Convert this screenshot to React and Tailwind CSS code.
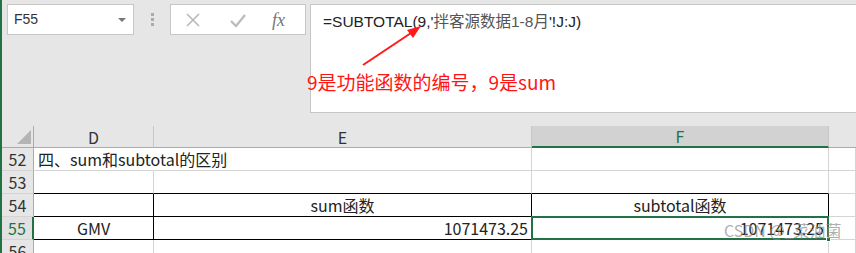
import React from 'react'

const font = { fontFamily: '"Noto Sans CJK SC", "Noto Sans", sans-serif' }

function Cell({ className = '', children }) {
  return (
    <div className={`flex items-center border-r border-b border-[#d4d4d4] bg-white text-[16px] text-[#222] overflow-visible whitespace-nowrap ${className}`}>
      {children}
    </div>
  )
}

function RowHead({ n, active }) {
  return (
    <div
      className={`flex items-center justify-center border-b border-[#d4d4d4] text-[16px] ${
        active
          ? 'bg-[#e1e1e1] text-[#217346] border-r-2 border-r-[#217346]'
          : 'bg-[#e6e6e6] text-[#333] border-r border-r-[#ababab]'
      }`}
    >
      {n}
    </div>
  )
}

export default function App() {
  return (
    <div
      className="relative w-[856px] h-[253px] overflow-hidden bg-[#e6e6e6] border-l-2 border-[#217346]"
      style={font}
    >
      {/* toolbar */}
      <div className="flex items-start h-[126px] pt-[4px]">
        <div className="ml-[5px] w-[127px] h-[31px] bg-white border border-[#c6c6c6] flex items-center justify-between pl-[6px] pr-[7px]">
          <span className="text-[14px] text-[#333] font-['Liberation_Sans',sans-serif]">F55</span>
          <span className="w-0 h-0 border-l-[4px] border-r-[4px] border-t-[4px] border-l-transparent border-r-transparent border-t-[#777]" />
        </div>
        <div className="ml-[17px] mt-[9px] flex flex-col gap-[2px]">
          <span className="w-[3px] h-[3px] bg-[#ababab]" />
          <span className="w-[3px] h-[3px] bg-[#ababab]" />
          <span className="w-[3px] h-[3px] bg-[#ababab]" />
        </div>
        <div className="ml-[16px] w-[136px] h-[31px] bg-white border border-[#c6c6c6] flex items-center">
          <svg width="16" height="16" viewBox="0 0 16 16" className="ml-[14px]">
            <path d="M2 2 L14 14 M14 2 L2 14" stroke="#b9b9b9" strokeWidth="1.6" fill="none" />
          </svg>
          <svg width="18" height="16" viewBox="0 0 18 16" className="ml-[28px]">
            <path d="M2 9 L7 14 L16 3" stroke="#bdbdbd" strokeWidth="2.4" fill="none" />
          </svg>
          <span className="ml-[25px] text-[18px] italic text-[#777] font-['Liberation_Serif',serif] leading-none">
            fx
          </span>
        </div>
        <div className="ml-[4px] flex-1 -mr-[4px] h-[109px] bg-white border border-[#c6c6c6] pl-[12px] pt-[3px]">
          <span className="text-[15.5px] text-[#222] font-['Liberation_Sans','Noto_Sans_CJK_SC',sans-serif]">
            =SUBTOTAL(9,'<span className="text-[#555]">拌客源数据1-8月</span>'!J:J)
          </span>
        </div>
      </div>

      {/* sheet grid */}
      <div className="grid grid-cols-[32px_120px_378px_297px_1fr] grid-rows-[22px_23px_23px_23px_23px_23px]">
        <div className="relative bg-[#e6e6e6] border-r border-b border-[#ababab]">
          <span className="absolute right-[2px] bottom-[3px] w-0 h-0" style={{ borderBottom: '14px solid #b4b4b4', borderLeft: '14px solid transparent' }} />
        </div>
        <div className="flex items-center justify-center bg-[#e6e6e6] border-r border-r-[#c6c6c6] border-b border-b-[#ababab] text-[16px] text-[#333]">D</div>
        <div className="flex items-center justify-center bg-[#e6e6e6] border-r border-r-[#c6c6c6] border-b border-b-[#ababab] text-[16px] text-[#333]">E</div>
        <div className="flex items-center justify-center bg-[#d2d2d2] border-r border-r-[#c6c6c6] border-b-2 border-b-[#217346] text-[16px] text-[#217346]">F</div>
        <div className="bg-[#e6e6e6] border-b border-b-[#ababab]" />

        {/* 52 */}
        <RowHead n="52" />
        <Cell className="pl-[4px] z-10 !border-r-transparent text-[16.5px]">四、sum和subtotal的区别</Cell>
        <Cell />
        <Cell />
        <Cell />

        {/* 53 */}
        <RowHead n="53" />
        <Cell className="!border-b-black" />
        <Cell className="!border-b-black" />
        <Cell className="!border-b-black" />
        <Cell />

        {/* 54 */}
        <RowHead n="54" />
        <Cell className="!border-r-black !border-b-black" />
        <Cell className="justify-center !border-r-black !border-b-black">sum函数</Cell>
        <Cell className="justify-center !border-r-black !border-b-black">subtotal函数</Cell>
        <Cell />

        {/* 55 */}
        <RowHead n="55" active />
        <Cell className="justify-center !border-r-black !border-b-black">GMV</Cell>
        <Cell className="justify-end pr-[3px] !border-r-black !border-b-black">1071473.25</Cell>
        <Cell className="relative justify-end pr-[4px] !border-b-black">
          1071473.25
          <span className="absolute -left-[1px] -top-[1px] -right-[1px] -bottom-[1px] border-2 border-[#217346]" />
          <span className="absolute -right-[3px] -bottom-[3px] w-[5px] h-[5px] bg-[#217346] border border-white" />
        </Cell>
        <Cell />

        {/* 56 */}
        <RowHead n="56" />
        <Cell />
        <Cell />
        <Cell />
        <Cell />
      </div>

      {/* annotation overlay */}
      <svg className="absolute left-0 top-0 pointer-events-none" width="856" height="253">
        <line x1="361" y1="65" x2="412" y2="31" stroke="#ff1a1a" strokeWidth="2" />
        <polygon points="419,26 405,30 411,38" fill="#ff1a1a" />
      </svg>
      <span className="absolute left-[305px] top-[72px] text-[19px] text-[#ff1414] leading-none whitespace-nowrap">
        9是功能函数的编号，9是sum
      </span>
      <span className="absolute left-[722px] top-[222px] text-[16px] text-[#8a8a8a]/70 whitespace-nowrap leading-none">
        CSDN @_菜油菌
      </span>
    </div>
  )
}
